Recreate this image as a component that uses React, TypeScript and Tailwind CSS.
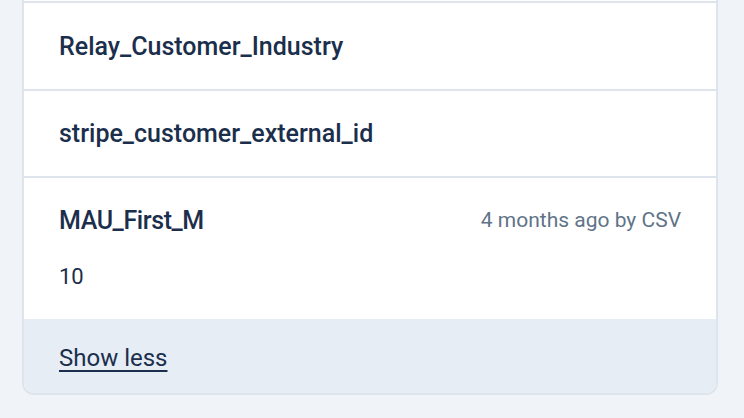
export default function App() {
  const font = { fontFamily: 'Roboto, "Noto Sans", sans-serif' };
  return (
    <div className="w-[744px] h-[418px] bg-[#f0f4f9] overflow-hidden" style={font}>
      <div className="ml-[22px] w-[696px] bg-white border-x-2 border-b-2 border-[#dee4ec] rounded-b-[12px] overflow-hidden">
        <div className="h-[1px] bg-white" />
        <div className="h-[88px] border-t-2 border-[#dee4ec] flex items-center px-[35px] pt-[2px]">
          <span className="text-[25px] font-medium text-[#1b2f4c]">Relay_Customer_Industry</span>
        </div>
        <div className="h-[87px] border-t-2 border-[#dee4ec] flex items-center px-[35px] pt-[1px]">
          <span className="text-[25px] font-medium text-[#1b2f4c]">stripe_customer_external_id</span>
        </div>
        <div className="h-[143px] border-t-2 border-[#dee4ec] px-[35px] pt-[24px]">
          <div className="flex items-center justify-between">
            <span className="text-[25px] font-medium text-[#1b2f4c] tracking-[-0.4px]">MAU_First_M</span>
            <span className="text-[21px] text-[#5f7488]">4 months ago by CSV</span>
          </div>
          <div className="mt-[20px] text-[22px] text-[#1b2f4c]">10</div>
        </div>
        <div className="h-[74px] bg-[#e6edf5] flex items-center px-[35px] pt-[3px]">
          <span className="text-[24px] text-[#1b2f4c] underline underline-offset-[4px] decoration-[2px]">Show less</span>
        </div>
      </div>
    </div>
  );
}
